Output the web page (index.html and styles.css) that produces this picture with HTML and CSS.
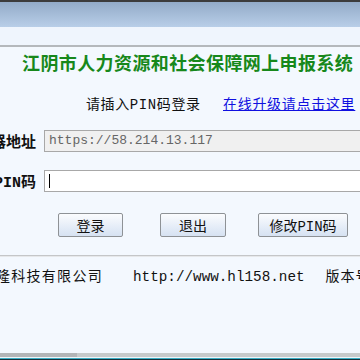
FILE: index.html
```html
<!DOCTYPE html>
<html lang="zh">
<head>
<meta charset="utf-8">
<link rel="stylesheet" href="styles.css">
</head>
<body>
<div class="page">
  <div class="topline"></div>
  <div class="header"></div>
  <div class="subheader"></div>
  <div class="title">江阴市人力资源和社会保障网上申报系统</div>
  <div class="prompt">
    <span class="prompt-text">请插入PIN码登录</span>
    <a class="link" href="#">在线升级请点击这里</a>
  </div>
  <div class="form">
    <div class="row">
      <div class="label">服务器地址</div>
      <div class="input readonly">https://58.214.13.117</div>
    </div>
    <div class="row">
      <div class="label">PIN码</div>
      <div class="input"><span class="caret"></span></div>
    </div>
  </div>
  <div class="buttons">
    <button class="btn btn-login">登录</button>
    <button class="btn btn-exit">退出</button>
    <button class="btn btn-pin">修改PIN码</button>
  </div>
  <div class="rule"></div>
  <div class="footer">
    <span class="company">华隆科技有限公司</span>
    <span class="url">http://www.hl158.net</span>
    <span class="version">版本号</span>
  </div>
  <div class="spacer"></div>
  <div class="scrollbar"><div class="thumb"></div></div>
  <div class="bottombar"></div>
</div>
</body>
</html>
```

FILE: styles.css
```css
html, body {
  margin: 0;
  padding: 0;
  width: 360px;
  height: 360px;
  overflow: hidden;
  background: #f3f8fe;
}
.page {
  width: 360px;
  height: 360px;
  display: flex;
  flex-direction: column;
  overflow: hidden;
  font-family: "Liberation Mono", "Noto Sans CJK SC", monospace;
  font-size: 14px;
  color: #111;
}
.topline {
  height: 2px;
  background: #3c3c3c;
  flex: none;
}
.header {
  height: 25px;
  flex: none;
  background: linear-gradient(#93abc8, #b8cee8);
}
.subheader {
  height: 18px;
  flex: none;
  background: #eff5fd;
  border-bottom: 2px solid #b4b8bc;
}
.title {
  height: 30px;
  line-height: 30px;
  flex: none;
  padding-left: 22px;
  font-family: "Noto Sans CJK SC", sans-serif;
  font-weight: bold;
  font-size: 18px;
  letter-spacing: 0.4px;
  color: #17881b;
  white-space: nowrap;
}
.prompt {
  flex: none;
  margin-top: 14px;
  height: 28px;
  line-height: 28px;
  padding-left: 86px;
  white-space: nowrap;
  display: flex;
}
.prompt-text {
  width: 137px;
  flex: none;
  letter-spacing: 0.6px;
}
.link {
  color: #1010e0;
  text-decoration: underline;
  letter-spacing: 0.7px;
}
.form {
  flex: none;
  margin-top: 2px;
}
.row {
  height: 40px;
  display: flex;
  align-items: center;
}
.label {
  width: 36px;
  flex: none;
  direction: rtl;
  text-align: right;
  white-space: nowrap;
  overflow: visible;
  font-weight: bold;
  font-size: 15px;
  margin-right: 8px;
}
.input {
  flex: none;
  width: 330px;
  height: 20px;
  border: 1px solid #a8a8a8;
  background: #fff;
  box-sizing: content-box;
  line-height: 20px;
  padding-left: 4px;
  font-size: 13px;
  color: #666;
  font-family: "Liberation Mono", monospace;
  white-space: nowrap;
  display: flex;
  align-items: center;
}
.input.readonly {
  background: #f0f0f0;
}
.caret {
  width: 1px;
  height: 14px;
  background: #000;
}
.buttons {
  flex: none;
  margin-top: 12px;
  height: 24px;
  display: flex;
  padding-left: 58px;
}
.btn {
  height: 24px;
  margin: 0;
  padding: 0;
  border: 1px solid #8e9296;
  border-radius: 2px;
  background: linear-gradient(#fbfcfe, #e4ecf7 60%, #d6e2f2);
  font-family: "Liberation Mono", "Noto Sans CJK SC", monospace;
  font-size: 14px;
  color: #111;
  flex: none;
}
.btn-login { width: 65px; }
.btn-exit { width: 66px; margin-left: 37px; }
.btn-pin { width: 90px; margin-left: 32px; }
.rule {
  flex: none;
  margin-top: 18px;
  height: 1px;
  border-top: 1px solid #c4c6c8;
  background: #e6e8ea;
}
.footer {
  flex: none;
  height: 40px;
  line-height: 40px;
  display: flex;
  white-space: nowrap;
}
.company {
  width: 103px;
  flex: none;
  direction: rtl;
  text-align: right;
  letter-spacing: 1.3px;
  overflow: visible;
}
.url {
  margin-left: 30px;
  flex: none;
  font-size: 14.3px;
}
.version {
  margin-left: 21px;
  flex: none;
  letter-spacing: 1px;
}
.spacer {
  flex: 1;
}
.scrollbar {
  flex: none;
  height: 4px;
  background: #c6cacb;
  display: flex;
}
.thumb {
  width: 77px;
  background: #b2b5b7;
}
.bottombar {
  flex: none;
  height: 3px;
  background: linear-gradient(#f0f4f8 0 1px, #3aafc6 1px 2px, #16303a 2px);
}
```
